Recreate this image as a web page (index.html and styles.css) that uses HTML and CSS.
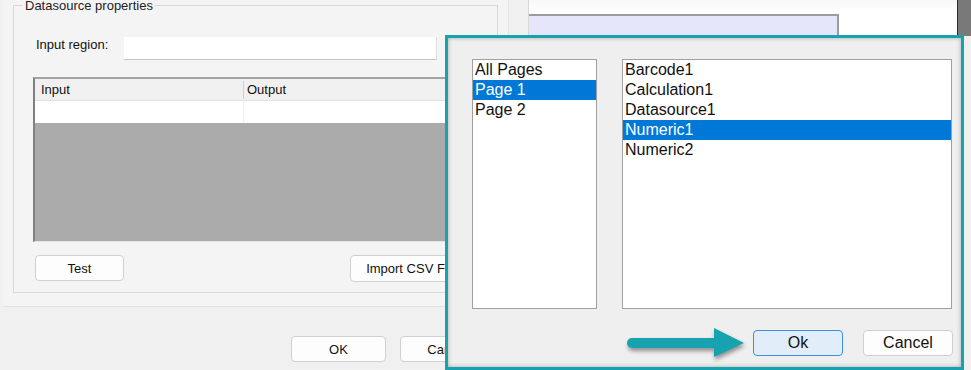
FILE: index.html
```html
<!DOCTYPE html>
<html lang="en">
<head>
    <meta charset="UTF-8">
    <meta name="viewport" content="width=device-width, initial-scale=1.0">
    <title>Select Field</title>
    <link rel="stylesheet" href="styles.css">
</head>
<body>

<div class="screen">
    <div class="app-dialog">
        <div class="panel">
            <fieldset class="group">
                <legend>Datasource properties</legend>
                <div class="group-body">
                    <div class="field-row">
                        <label class="field-label" for="inputRegion">Input region:</label>
                        <input type="text" id="inputRegion" class="field-input">
                    </div>
                    <div class="grid">
                        <div class="grid-head">
                            <span>Input</span>
                            <span>Output</span>
                        </div>
                        <div class="grid-row">
                            <span></span>
                            <span></span>
                        </div>
                    </div>
                    <div class="group-actions">
                        <button class="win-btn btn-test">Test</button>
                        <button class="win-btn btn-import">Import CSV File</button>
                    </div>
                </div>
            </fieldset>
        </div>
        <div class="dialog-footer">
            <button class="win-btn">OK</button>
            <button class="win-btn">Cancel</button>
        </div>
    </div>
    <div class="canvas">
        <div class="canvas-frame"></div>
    </div>
    <div class="scrollbar">
        <div class="scroll-thumb"></div>
    </div>
</div>

<div class="picker">
    <div class="picker-lists">
        <ul class="listbox pages">
            <li>All Pages</li>
            <li class="selected">Page 1</li>
            <li>Page 2</li>
        </ul>
        <ul class="listbox fields">
            <li>Barcode1</li>
            <li>Calculation1</li>
            <li>Datasource1</li>
            <li class="selected">Numeric1</li>
            <li>Numeric2</li>
        </ul>
    </div>
    <div class="picker-actions">
        <button class="win-btn picker-btn is-default">Ok</button>
        <button class="win-btn picker-btn">Cancel</button>
    </div>

    <!-- callout pointing at the Ok button -->
    <svg class="callout-arrow" width="130" height="45" viewBox="0 0 130 45">
        <line x1="12" y1="21" x2="98" y2="21" stroke="#17a2af" stroke-width="10" stroke-linecap="round"/>
        <polygon points="94,6 124,21 94,35" fill="#17a2af"/>
    </svg>
</div>

</body>
</html>
```

FILE: styles.css
```css
* {
    box-sizing: border-box;
}

body {
    margin: 0;
    width: 971px;
    height: 370px;
    overflow: hidden;
    background: #f0f0f0;
    color: #111;
    font-family: 'Liberation Sans', Arial, sans-serif;
    font-size: 13px;
}

.screen {
    display: flex;
    height: 370px;
}

/* background app dialog */
.app-dialog {
    width: 528px;
    flex-shrink: 0;
    background: #f0f0f0;
}

.panel {
    display: flex;
    flex-direction: column;
    margin-left: 3px;
    width: 506px;
    padding-bottom: 13px;
    background: #f4f4f4;
    border-right: 1px solid #e4e4e4;
    border-bottom: 1px solid #e2e2e2;
}

.group {
    margin: -2px 0 0 10px;
    padding: 0;
    width: 485px;
    border: 1px solid #d8d8d8;
    min-width: 0;
}

.group legend {
    margin-left: 9px;
    padding: 0 2px;
    line-height: 15px;
    color: #222;
}

.group-body {
    padding: 24px 0 10px 19px;
}

.field-row {
    display: flex;
    align-items: flex-start;
}

.field-label {
    width: 91px;
    padding-left: 3px;
    line-height: 15px;
}

.field-input {
    width: 313px;
    height: 23px;
    background: #fff;
    border: none;
    border-bottom: 1px solid #c4c4c4;
    border-right: 1px solid #e0e0e0;
    outline: none;
}

.grid {
    margin-top: 17px;
    width: 452px;
    height: 165px;
    background: #ababab;
    border-top: 2px solid #a2a2a2;
    border-left: 2px solid #808080;
    border-bottom: 1px solid #e4e4e4;
}

.grid-head, .grid-row {
    display: grid;
    grid-template-columns: 209px 1fr;
    height: 22px;
    line-height: 22px;
}

.grid-head {
    background: #f0f0f0;
    border-bottom: 1px solid #e2e2e2;
}

.grid-head span:first-child {
    padding-left: 6px;
    border-right: 1px solid #cfcfcf;
    margin: 2px 0;
    line-height: 18px;
}

.grid-head span:last-child {
    padding-left: 3px;
}

.grid-row {
    background: #fff;
    height: 22px;
}

.grid-row span:first-child {
    border-right: 1px solid #f0f0f0;
}

.group-actions {
    display: flex;
    margin-top: 13px;
}

.win-btn {
    height: 26px;
    font: inherit;
    color: #111;
    background: #fdfdfd;
    border: 1px solid #d0d0d0;
    border-radius: 4px;
    padding: 0;
}

.btn-test {
    margin-left: 2px;
    width: 89px;
}

.btn-import {
    margin-left: 226px;
    width: 124px;
    height: 27px;
}

.dialog-footer {
    display: flex;
    justify-content: flex-end;
    gap: 14px;
    padding: 29px 33px 0 0;
}

.dialog-footer .win-btn {
    width: 95px;
}

/* designer canvas behind */
.canvas {
    flex: 1;
    background: linear-gradient(#f7f7f7, #fff 12px);
    border-left: 1px solid #d8d8d8;
}

.canvas-frame {
    margin-top: 14px;
    width: 310px;
    height: 40px;
    background: #e6e6fa;
    border-top: 2px solid #9c9c9c;
    border-right: 2px solid #9c9c9c;
}

.scrollbar {
    width: 14px;
    background: #f0f0f0;
}

.scroll-thumb {
    height: 36px;
    background: #797979;
    border-left: 1px solid #2b2b2b;
}

/* overlay picker dialog */
.picker {
    position: absolute;
    left: 445px;
    top: 35px;
    width: 519px;
    height: 335px;
    padding: 21px 8px 0 24px;
    background: #efefef;
    border: 3px solid #17a2af;
    box-shadow: inset 0 0 4px rgba(0, 0, 0, 0.3);
    font-size: 16px;
}

.picker-lists {
    display: flex;
    gap: 25px;
}

.listbox {
    list-style: none;
    margin: 0;
    padding: 0;
    height: 250px;
    background: #fff;
    border: 1px solid #a0a0a0;
}

.listbox.pages {
    width: 125px;
}

.listbox.fields {
    width: 330px;
}

.listbox li {
    line-height: 20px;
    padding-left: 2px;
    color: #111;
}

.listbox li.selected {
    background: #0078d7;
    color: #fff;
}

.picker-actions {
    display: flex;
    justify-content: flex-end;
    gap: 20px;
    margin-top: 21px;
}

.picker-btn {
    width: 90px;
    font-size: 16px;
}

.picker-btn.is-default {
    background: #e1edf9;
    border-color: #3d8ee0;
}

.callout-arrow {
    position: absolute;
    left: 172px;
    top: 284px;
    filter: drop-shadow(1px 3px 2px rgba(0, 0, 0, 0.4));
}
```
